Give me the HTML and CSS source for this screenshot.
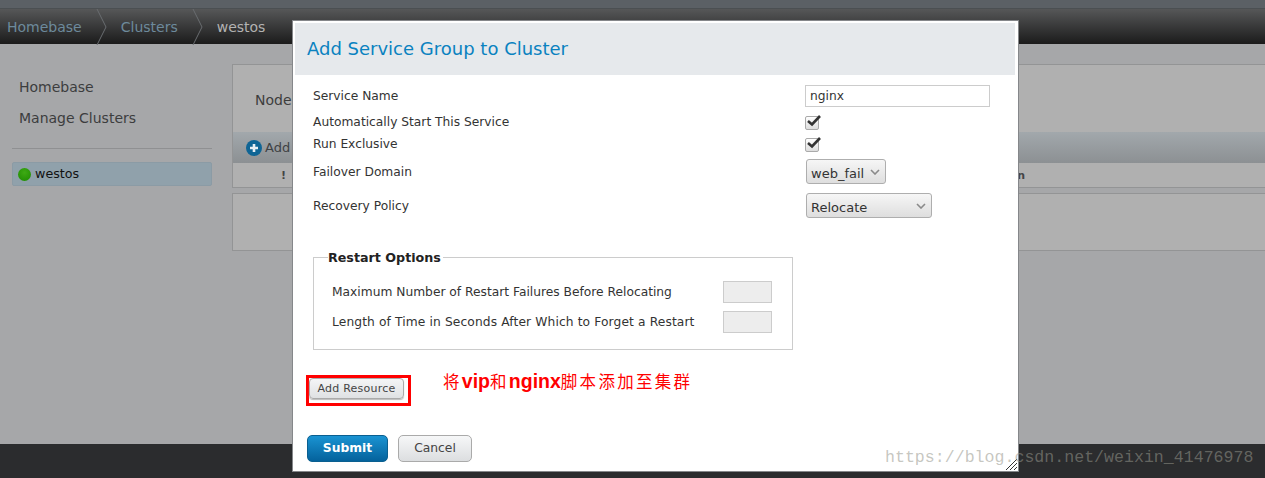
FILE: index.html
```html
<!DOCTYPE html>
<html lang="en">
<head>
<meta charset="utf-8">
<title>Add Service Group to Cluster</title>
<link rel="stylesheet" href="styles.css">
</head>
<body>
<div class="page">
  <div class="strip"></div>
  <nav class="crumbs">
    <span class="crumb link">Homebase</span>
    <svg class="sep" width="12" height="36" viewBox="0 0 12 36"><path d="M1 0 L10 18 L1 36" fill="none" stroke="#6a6d70"/></svg>
    <span class="crumb link c2">Clusters</span>
    <svg class="sep" width="12" height="36" viewBox="0 0 12 36"><path d="M1 0 L10 18 L1 36" fill="none" stroke="#6a6d70"/></svg>
    <span class="crumb c3">westos</span>
  </nav>
  <main class="main">
    <aside class="side">
      <div class="side-link first">Homebase</div>
      <div class="side-link">Manage Clusters</div>
      <hr class="side-rule">
      <div class="cluster"><span class="dot"></span><span class="cluster-name">westos</span></div>
    </aside>
    <section class="content">
      <div class="panel">
        <div class="panel-title">Nodes</div>
        <div class="toolbar"><span class="plus"><svg width="16" height="16" viewBox="0 0 16 16"><circle cx="8" cy="8" r="8" fill="#0f6595"/><path d="M8 4v8M4 8h8" stroke="#e8eef2" stroke-width="2.6"/></svg></span>Add</div>
        <div class="thead"><span class="bang">!</span><span class="thead-end">n</span></div>
      </div>
      <div class="panel2"></div>
    </section>
  </main>
  <footer class="footer"></footer>

  <div class="modal">
    <h2 class="modal-title">Add Service Group to Cluster</h2>
    <div class="form">
      <div class="row r-name"><span>Service Name</span><input class="text" type="text" value="nginx"></div>
      <div class="row r-check"><span>Automatically Start This Service</span><span class="check"><svg width="16" height="14" viewBox="0 0 16 14"><path d="M2 6 L6 9.5 L14 1" fill="none" stroke="#333" stroke-width="2.6"/></svg></span></div>
      <div class="row r-check2"><span>Run Exclusive</span><span class="check"><svg width="16" height="14" viewBox="0 0 16 14"><path d="M2 6 L6 9.5 L14 1" fill="none" stroke="#333" stroke-width="2.6"/></svg></span></div>
      <div class="row r-sel"><span>Failover Domain</span><span class="select s-short">web_fail<svg width="10" height="6" viewBox="0 0 10 6"><path d="M1 1 L5 5 L9 1" fill="none" stroke="#8a8a8a" stroke-width="1.6"/></svg></span></div>
      <div class="row r-sel2"><span>Recovery Policy</span><span class="select s-long">Relocate<svg width="10" height="6" viewBox="0 0 10 6"><path d="M1 1 L5 5 L9 1" fill="none" stroke="#8a8a8a" stroke-width="1.6"/></svg></span></div>
      <fieldset class="options">
        <legend>Restart Options</legend>
        <div class="opt"><span>Maximum Number of Restart Failures Before Relocating</span><input class="num" type="text"></div>
        <div class="opt"><span class="opt-long">Length of Time in Seconds After Which to Forget a Restart</span><input class="num" type="text"></div>
      </fieldset>
      <div class="resource-row">
        <span class="redbox"><button class="btn-res" type="button">Add Resource</button></span>
        <span class="note">将<b>vip</b>和<b>nginx</b>脚本添加至集群</span>
      </div>
      <div class="actions">
        <button class="submit" type="button">Submit</button>
        <button class="cancel" type="button">Cancel</button>
      </div>
    </div>
    <svg class="grip" width="12" height="12" viewBox="0 0 12 12"><path d="M1 12 L12 1 M5 12 L12 5 M9 12 L12 9" stroke="#333" stroke-width="1"/></svg>
  </div>
  <div class="watermark">https://blog.csdn.net/weixin_41476978</div>
</div>
</body>
</html>
```
FILE: styles.css
```css
html, body { margin: 0; padding: 0; height: 478px; overflow: hidden; }
body { font-family: "DejaVu Sans", sans-serif; color: #333; background: #a6a7a9; }
* { box-sizing: border-box; }
.page { position: relative; height: 478px; display: flex; flex-direction: column; }
.strip { height: 9px; background: #5b6065; border-bottom: 1px solid #4b4f52; }
.crumbs { height: 35px; display: flex; align-items: center; font-size: 14px; background: linear-gradient(#565758, #1b1b1b); }
.crumb { padding-left: 7px; }
.link { color: #6d8a9c; }
.c2 { padding-left: 13px; }
.c3 { padding-left: 13px; color: #b3b3b3; }
.sep { margin-left: 14px; flex: none; }
.main { flex: 1; display: flex; min-height: 0; }
.side { width: 232px; flex: none; padding: 0 20px 0 12px; }
.side-link { font-size: 14px; color: #3c3d3e; padding-left: 7px; height: 31px; line-height: 31px; }
.side-link.first { margin-top: 28px; }
.side-rule { border: 0; border-top: 1px solid #8f9092; margin: 14px 0 13px; }
.cluster { height: 24px; background: #90a1ab; border: 1px solid #8b9ba5; border-radius: 2px; font-size: 12.7px; color: #111; display: flex; align-items: center; padding-left: 5px; gap: 4px; }
.cluster-name { padding-bottom: 1px; }
.dot { width: 13px; height: 13px; border-radius: 50%; background: radial-gradient(circle at 50% 35%, #3eaa14, #1c8a00); }
.content { flex: 1; padding-top: 20px; }
.panel { border: 1px solid #939495; border-right: 0; background: #b0b0b0; height: 124px; display: flex; flex-direction: column; }
.panel-title { height: 67px; flex: none; padding: 27px 0 0 22px; font-size: 14px; color: #3d3d3d; }
.toolbar { height: 31px; flex: none; display: flex; align-items: center; gap: 3px; padding-left: 13px; font-size: 13px; color: #3f4244; background: linear-gradient(#a2a8ac, #8c9093); }
.plus { display: flex; }
.thead { flex: 1; position: relative; display: flex; align-items: center; font-size: 11px; font-weight: bold; color: #444; }
.bang { margin-left: 48px; }
.thead-end { margin-left: auto; padding-right: 240px; }
.panel2 { margin-top: 5px; height: 58px; background: #b0b0b0; border: 1px solid #939495; border-right: 0; }
.footer { height: 34px; flex: none; background: #2b2c2e; }

.modal { position: absolute; left: 292px; top: 20px; width: 727px; height: 452px; background: #fff; border: 1px solid #85878a; padding: 2px; }
.modal-title { margin: 0 1px 0 0; height: 52px; background: #e6e9ec; color: #0a82c0; font-size: 18px; font-weight: normal; line-height: 52px; padding-left: 12px; }
.form { padding: 0 0 0 18px; font-size: 12.25px; color: #333; }
.row { display: flex; align-items: center; justify-content: space-between; }
.row > :first-child { flex: 1; padding-bottom: 1px; }
.r-sel > :first-child, .r-sel2 > :first-child { padding-bottom: 0; }
.r-name { height: 22px; margin-top: 10px; }
.text { width: 185px; height: 22px; border: 1px solid #ccc; margin: 0 26px 0 0; padding: 0 4px; font: 12.25px "DejaVu Sans", sans-serif; color: #333; outline: 0; }
.r-check { height: 22px; margin-top: 4px; }
.r-check2 { height: 22px; }
.check { width: 184px; flex: none; margin-right: 27px; display: flex; height: 14px; position: relative; }
.check::before { content: ""; position: absolute; left: 0; top: 1px; width: 12px; height: 12px; border: 1px solid #aaa; border-radius: 2px; background: linear-gradient(#fff, #ddd); }
.check svg { flex: none; position: relative; margin-left: 1px; }
.r-sel { height: 25px; margin-top: 4px; }
.r-sel2 { height: 25px; margin-top: 9px; }
.select { flex: none; height: 25px; border: 1px solid #aeaeae; border-radius: 3px; background: linear-gradient(#f6f6f6, #dedede); display: flex; align-items: center; justify-content: space-between; font-size: 13px; color: #333; padding: 3px 5px 0 4px; }
.select svg { margin-bottom: 3px; }
.s-short { width: 80px; margin-right: 130px; }
.s-long { width: 126px; margin-right: 84px; }
.options { width: 480px; height: 102px; margin: 30px 0 0; padding: 0 20px 0 18px; border: 1px solid #ccc; display: block; }
.options legend { font-size: 12.7px; font-weight: bold; color: #222; padding: 1px 2px 0 0; margin-left: -4px; line-height: 18px; }
.opt { height: 30px; display: flex; align-items: center; justify-content: space-between; }
.opt:first-of-type { margin-top: 10px; }
.opt-long { letter-spacing: .12px; }
.num { width: 49px; height: 22px; background: #ededed; border: 1px solid #ccc; margin: 0; padding: 0; outline: 0; }
.resource-row { display: flex; align-items: flex-start; margin: 25px 0 0 -7px; position: relative; }
.redbox { width: 105px; height: 31px; border: 3px solid #f00; display: flex; }
.btn-res { width: 95px; height: 21px; margin: 0; padding: 0; border: 1px solid #aaa; border-radius: 4px; background: linear-gradient(#f4f5f6, #dfe1e3); font: 11px "DejaVu Sans", sans-serif; letter-spacing: .25px; color: #444; box-shadow: 0 1px 1px #bbb; }
.note { margin: -6px 0 0 32px; color: #f00; font-family: "Noto Sans CJK SC", sans-serif; font-size: 16.5px; letter-spacing: 2.3px; line-height: 24px; white-space: nowrap; }
.note b { font-family: "Liberation Sans", sans-serif; font-size: 19.5px; letter-spacing: 0; font-weight: bold; }
.actions { display: flex; gap: 10px; margin: 29px 0 0 -6px; }
.submit, .cancel { height: 27px; padding: 0 0 2px; border-radius: 5px; font: 12.3px "DejaVu Sans", sans-serif; }
.submit { width: 81px; border: 1px solid #0a5f90; background: linear-gradient(#1a93d2, #04629c); color: #fff; font-weight: bold; }
.cancel { width: 74px; border: 1px solid #aaa; background: linear-gradient(#f6f7f8, #dcdee0); color: #444; }
.grip { position: absolute; right: 1px; bottom: 1px; }
.watermark { position: absolute; left: 885px; top: 447px; font-family: "Liberation Mono", monospace; font-size: 16.6px; line-height: 22px; color: rgba(150, 150, 140, .55); white-space: nowrap; }
```
